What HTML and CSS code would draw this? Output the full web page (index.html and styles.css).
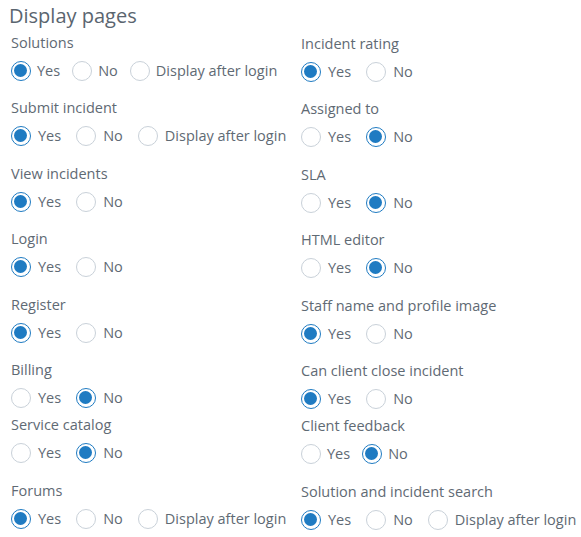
FILE: index.html
```html
<!DOCTYPE html>
<html>
<head>
<meta charset="utf-8">
<link rel="stylesheet" href="styles.css">
</head>
<body>
<div class="page">
  <h1 class="title">Display pages</h1>
  <div class="columns">
    <div class="col">
      <div class="group">
        <div class="label">Solutions</div>
        <div class="opts compact">
          <span class="opt"><span class="radio on"></span>Yes</span>
          <span class="opt"><span class="radio"></span>No</span>
          <span class="opt"><span class="radio"></span>Display after login</span>
        </div>
      </div>
      <div class="group">
        <div class="label">Submit incident</div>
        <div class="opts">
          <span class="opt"><span class="radio on"></span>Yes</span>
          <span class="opt"><span class="radio"></span>No</span>
          <span class="opt"><span class="radio"></span>Display after login</span>
        </div>
      </div>
      <div class="group">
        <div class="label">View incidents</div>
        <div class="opts">
          <span class="opt"><span class="radio on"></span>Yes</span>
          <span class="opt"><span class="radio"></span>No</span>
        </div>
      </div>
      <div class="group">
        <div class="label">Login</div>
        <div class="opts">
          <span class="opt"><span class="radio on"></span>Yes</span>
          <span class="opt"><span class="radio"></span>No</span>
        </div>
      </div>
      <div class="group">
        <div class="label">Register</div>
        <div class="opts">
          <span class="opt"><span class="radio on"></span>Yes</span>
          <span class="opt"><span class="radio"></span>No</span>
        </div>
      </div>
      <div class="group tight">
        <div class="label">Billing</div>
        <div class="opts">
          <span class="opt"><span class="radio"></span>Yes</span>
          <span class="opt"><span class="radio on"></span>No</span>
        </div>
      </div>
      <div class="group">
        <div class="label">Service catalog</div>
        <div class="opts">
          <span class="opt"><span class="radio"></span>Yes</span>
          <span class="opt"><span class="radio on"></span>No</span>
        </div>
      </div>
      <div class="group">
        <div class="label">Forums</div>
        <div class="opts">
          <span class="opt"><span class="radio on"></span>Yes</span>
          <span class="opt"><span class="radio"></span>No</span>
          <span class="opt"><span class="radio"></span>Display after login</span>
        </div>
      </div>
    </div>
    <div class="col right">
      <div class="group">
        <div class="label">Incident rating</div>
        <div class="opts">
          <span class="opt"><span class="radio on"></span>Yes</span>
          <span class="opt"><span class="radio"></span>No</span>
        </div>
      </div>
      <div class="group">
        <div class="label">Assigned to</div>
        <div class="opts">
          <span class="opt"><span class="radio"></span>Yes</span>
          <span class="opt"><span class="radio on"></span>No</span>
        </div>
      </div>
      <div class="group">
        <div class="label">SLA</div>
        <div class="opts">
          <span class="opt"><span class="radio"></span>Yes</span>
          <span class="opt"><span class="radio on"></span>No</span>
        </div>
      </div>
      <div class="group">
        <div class="label">HTML editor</div>
        <div class="opts">
          <span class="opt"><span class="radio"></span>Yes</span>
          <span class="opt"><span class="radio on"></span>No</span>
        </div>
      </div>
      <div class="group">
        <div class="label">Staff name and profile image</div>
        <div class="opts">
          <span class="opt"><span class="radio on"></span>Yes</span>
          <span class="opt"><span class="radio"></span>No</span>
        </div>
      </div>
      <div class="group tight">
        <div class="label">Can client close incident</div>
        <div class="opts">
          <span class="opt"><span class="radio on"></span>Yes</span>
          <span class="opt"><span class="radio"></span>No</span>
        </div>
      </div>
      <div class="group">
        <div class="label">Client feedback</div>
        <div class="opts compact">
          <span class="opt"><span class="radio"></span>Yes</span>
          <span class="opt"><span class="radio on"></span>No</span>
        </div>
      </div>
      <div class="group">
        <div class="label">Solution and incident search</div>
        <div class="opts">
          <span class="opt"><span class="radio on"></span>Yes</span>
          <span class="opt"><span class="radio"></span>No</span>
          <span class="opt"><span class="radio"></span>Display after login</span>
        </div>
      </div>
    </div>
  </div>
</div>
</body>
</html>
```

FILE: styles.css
```css
html, body {
  margin: 0;
  padding: 0;
  background: #ffffff;
}
body {
  font-family: "Open Sans", "Liberation Sans", sans-serif;
  color: #5f6a74;
}
.page {
  padding: 3.5px 0 0 10px;
}
.title {
  margin: 0 0 5px -1px;
  font-size: 20px;
  line-height: 24px;
  font-weight: 400;
  color: #5a656f;
}
.columns {
  display: grid;
  grid-template-columns: 290px 1fr;
}
.col {
  padding-left: 1px;
}
.right {
  padding-top: 1px;
}
.group {
  margin-bottom: 17.6px;
}
.group.tight {
  margin-bottom: 7px;
}
.label {
  font-size: 14.5px;
  line-height: 20px;
  margin-bottom: 8px;
  white-space: nowrap;
}
.opts {
  display: flex;
  align-items: center;
  height: 20px;
}
.opt {
  display: flex;
  align-items: center;
  flex-shrink: 0;
  white-space: nowrap;
  font-size: 14.5px;
  line-height: 20px;
  margin-right: 15px;
}
.radio {
  box-sizing: border-box;
  width: 20px;
  height: 20px;
  border-radius: 50%;
  border: 1px solid #c9d1d9;
  background: #fff;
  margin-right: 7px;
  position: relative;
}
.compact .opt {
  margin-right: 12px;
}
.compact .radio {
  margin-right: 6px;
}
.radio.on {
  border: 1.5px solid #1f7bc2;
}
.radio.on::after {
  content: "";
  position: absolute;
  left: 2px;
  top: 2px;
  width: 13px;
  height: 13px;
  border-radius: 50%;
  background: #1f7bc2;
}
```
